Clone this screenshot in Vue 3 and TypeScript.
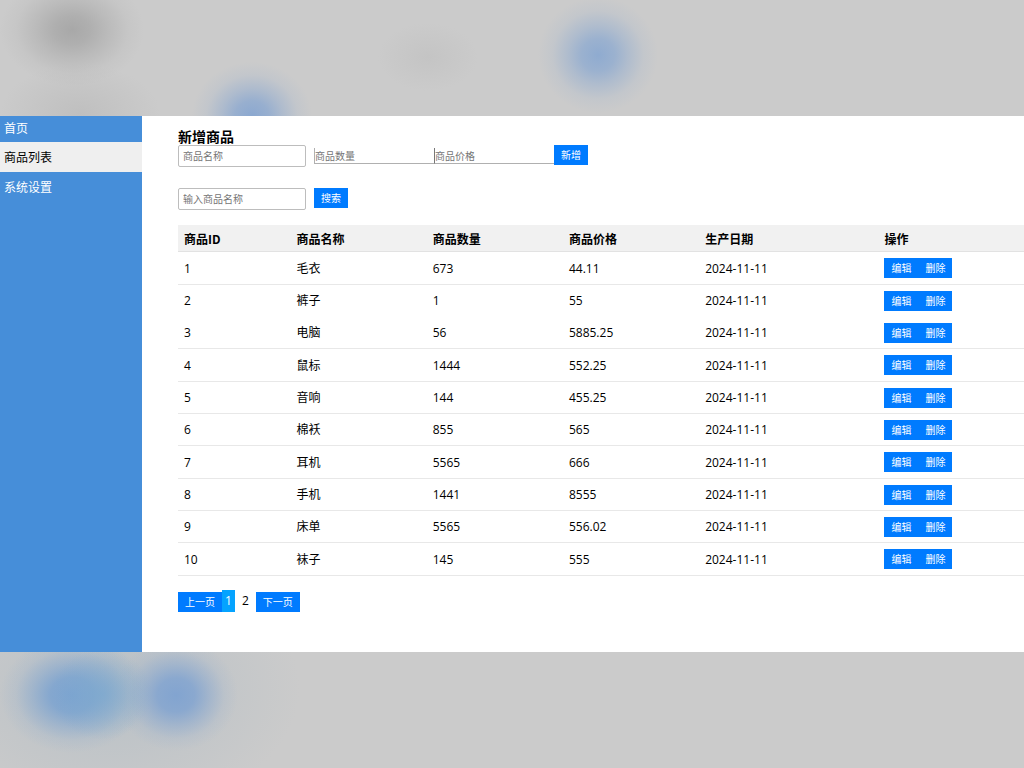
<script setup lang="ts">
import { computed, ref } from 'vue'

interface Product {
  id: number
  name: string
  count: number
  price: string
  date: string
}

const menu = ['首页', '商品列表', '系统设置']
const active = ref('商品列表')
const keyword = ref('')
const query = ref('')
const name = ref('')
const count = ref('')
const price = ref('')
const page = ref(1)

const columns = ['商品ID', '商品名称', '商品数量', '商品价格', '生产日期', '操作']

const products = ref<Product[]>([
  { id: 1, name: '毛衣', count: 673, price: '44.11', date: '2024-11-11' },
  { id: 2, name: '裤子', count: 1, price: '55', date: '2024-11-11' },
  { id: 3, name: '电脑', count: 56, price: '5885.25', date: '2024-11-11' },
  { id: 4, name: '鼠标', count: 1444, price: '552.25', date: '2024-11-11' },
  { id: 5, name: '音响', count: 144, price: '455.25', date: '2024-11-11' },
  { id: 6, name: '棉袄', count: 855, price: '565', date: '2024-11-11' },
  { id: 7, name: '耳机', count: 5565, price: '666', date: '2024-11-11' },
  { id: 8, name: '手机', count: 1441, price: '8555', date: '2024-11-11' },
  { id: 9, name: '床单', count: 5565, price: '556.02', date: '2024-11-11' },
  { id: 10, name: '袜子', count: 145, price: '555', date: '2024-11-11' },
])

const rows = computed(() =>
  products.value
    .filter((p) => p.name.includes(query.value))
    .slice((page.value - 1) * 10, page.value * 10),
)

function add() {
  if (!name.value) return
  products.value.push({
    id: products.value.length + 1,
    name: name.value,
    count: Number(count.value),
    price: String(price.value),
    date: '2024-11-11',
  })
}

function remove(id: number) {
  products.value = products.value.filter((p) => p.id !== id)
}
</script>

<template>
  <div class="backdrop">
    <div class="app">
      <nav class="sidebar">
        <a
          v-for="item in menu"
          :key="item"
          href="#"
          class="item"
          :class="{ current: item === active }"
          @click.prevent="active = item"
        >{{ item }}</a>
      </nav>

      <main class="content">
        <h1 class="title">新增商品</h1>
        <form class="row" @submit.prevent="add">
          <input v-model="name" class="field" type="text" placeholder="商品名称" aria-label="商品名称" />
          <input v-model="count" class="plain" type="number" placeholder="商品数量" aria-label="商品数量" />
          <input v-model="price" class="plain dark" type="number" placeholder="商品价格" aria-label="商品价格" />
          <button class="btn" type="submit">新增</button>
        </form>

        <form class="row search" @submit.prevent="query = keyword">
          <input v-model="keyword" class="field" type="text" placeholder="输入商品名称" aria-label="输入商品名称" />
          <button class="btn" type="submit">搜索</button>
        </form>

        <table class="table">
          <colgroup>
            <col class="c-id" />
            <col class="c-mid" />
            <col class="c-mid" />
            <col class="c-mid" />
            <col class="c-date" />
            <col />
          </colgroup>
          <thead>
            <tr>
              <th v-for="c in columns" :key="c" scope="col">{{ c }}</th>
            </tr>
          </thead>
          <tbody>
            <tr v-for="p in rows" :key="p.id">
              <td>{{ p.id }}</td>
              <td>{{ p.name }}</td>
              <td>{{ p.count }}</td>
              <td>{{ p.price }}</td>
              <td>{{ p.date }}</td>
              <td class="ops">
                <div class="actions">
                  <button class="btn" type="button">编辑</button>
                  <button class="btn" type="button" @click="remove(p.id)">删除</button>
                </div>
              </td>
            </tr>
          </tbody>
        </table>

        <div class="pager">
          <button class="btn" type="button" @click="page = 1">上一页</button>
          <button
            v-for="n in 2"
            :key="n"
            class="num"
            :class="{ on: n === page }"
            type="button"
            @click="page = n"
          >{{ n }}</button>
          <button class="btn" type="button" @click="page = 2">下一页</button>
        </div>
      </main>
    </div>
  </div>
</template>

<style>
body {
  margin: 0;
}
</style>

<style scoped>
.backdrop {
  box-sizing: border-box;
  min-height: 100vh;
  display: flex;
  flex-direction: column;
  justify-content: center;
  font-family: "Open Sans", "Noto Sans CJK SC", sans-serif;
  font-size: 12px;
  color: #000;
  background:
    radial-gradient(72px 56px at 72px 30px, #a8a8a8 0%, #a8a8a8cc 25%, #a8a8a877 50%, #a8a8a822 78%, #a8a8a800 100%),
    radial-gradient(60px 58px at 598px 55px, #8fabd0 0%, #8fabd0cc 28%, #8fabd077 50%, #8fabd022 76%, #8fabd000 100%),
    radial-gradient(60px 54px at 252px 116px, #8ba8d0 0%, #8ba8d0cc 28%, #8ba8d077 50%, #8ba8d022 76%, #8ba8d000 100%),
    radial-gradient(50px 34px at 428px 57px, #c4c4c4 0%, #c4c4c400 100%),
    radial-gradient(80px 50px at 80px 114px, #bfbfbf 0%, #bfbfbf00 100%),
    radial-gradient(50px 46px at 102px calc(100% - 74px), #7ca9cfbb 0%, #7ca9cf66 45%, #7ca9cf00 100%),
    radial-gradient(72px 58px at 72px calc(100% - 73px), #7ca3d0 0%, #7ca3d0dd 30%, #7ca3d077 55%, #7ca3d022 78%, #7ca3d000 100%),
    radial-gradient(62px 56px at 176px calc(100% - 73px), #82a4d0 0%, #82a4d0dd 30%, #82a4d077 55%, #82a4d022 78%, #82a4d000 100%),
    radial-gradient(190px 130px at 110px calc(100% - 80px), #b8c0c6 0%, #b8c0c600 100%),
    #cbcbcb;
}

.app {
  display: flex;
  min-height: 536px;
  background: #fff;
}

.sidebar {
  flex: none;
  width: 142px;
  background: #468ed9;
}

.item {
  display: block;
  box-sizing: border-box;
  height: 30px;
  padding: 2px 0 0 4px;
  line-height: 28px;
  color: #fff;
  text-decoration: none;
}

.item:first-child {
  height: 26px;
  padding-top: 0;
  line-height: 26px;
}

.item.current {
  background: #efefef;
  color: #000;
}

.content {
  flex: 1;
  min-width: 0;
  padding: 12px 0 0 36px;
}

.title {
  margin: 0;
  font-size: 14px;
  line-height: 17px;
  font-weight: 700;
}

.row {
  display: flex;
  align-items: flex-start;
}

.search {
  margin: 21px 0 15px;
}

.field,
.plain {
  box-sizing: border-box;
  margin: 0;
  font-family: inherit;
  font-size: 10px;
  color: #000;
  background: #fff;
  outline: none;
}

.field {
  width: 128px;
  height: 22px;
  margin-right: 8px;
  padding: 0 4px;
  border: 1px solid #bdbdbd;
  border-radius: 2px;
}

.plain {
  align-self: center;
  width: 120px;
  height: 16px;
  padding: 0;
  border: 0 solid #b0b0b0;
  border-width: 0 0 1px 1px;
  appearance: textfield;
}

.dark {
  border-left-color: #777;
}

.field::placeholder,
.plain::placeholder {
  color: #757575;
  opacity: 1;
}

.btn {
  height: 20px;
  margin: 0;
  padding: 1px 7px 0;
  border: 0;
  font-family: inherit;
  font-size: 10px;
  line-height: 19px;
  color: #fff;
  background: #007bff;
  cursor: pointer;
}

.table {
  width: 100%;
  table-layout: fixed;
  border-collapse: separate;
  border-spacing: 0;
}

.c-id {
  width: 13.3%;
}

.c-mid {
  width: 16.1%;
}

.c-date {
  width: 21.2%;
}

.table th,
.table td {
  box-sizing: border-box;
  padding: 1px 6px 0;
  text-align: left;
  vertical-align: middle;
  line-height: 20px;
  border-bottom: 1px solid #e8e8e8;
}

.table th {
  height: 27px;
  padding-top: 2px;
  font-family: "Noto Sans CJK SC", sans-serif;
  font-weight: 700;
  background: #f1f1f1;
  border-bottom-color: #e2e2e2;
}

.table td {
  height: 32px;
}

.table td.ops {
  padding-top: 0;
}

.table tr:nth-child(3n + 1) td {
  height: 33px;
}

.table tbody tr:nth-child(2) td {
  border-bottom-color: transparent;
}

.actions {
  display: flex;
}

.pager {
  display: flex;
  align-items: flex-end;
  margin-top: 14px;
}

.num {
  height: 22px;
  margin: 0 4px;
  padding: 0 3px;
  border: 0;
  font-family: inherit;
  font-size: 12px;
  line-height: 22px;
  color: #000;
  background: none;
  cursor: pointer;
}

.num.on {
  margin: 0;
  color: #fff;
  background: #05a3ff;
}
</style>
